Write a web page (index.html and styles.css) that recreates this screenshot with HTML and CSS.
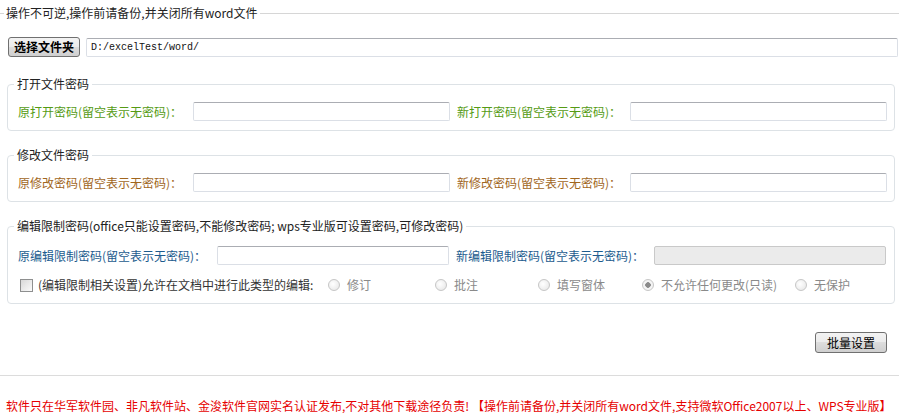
FILE: index.html
```html
<!DOCTYPE html>
<html lang="zh-CN">
<head>
<meta charset="UTF-8">
<title>批量设置Word密码</title>
<link rel="stylesheet" href="styles.css">
</head>
<body>

<fieldset class="notice">
    <legend>操作不可逆,操作前请备份,并关闭所有word文件</legend>
</fieldset>

<div class="path-row">
    <button type="button" class="btn btn-folder">选择文件夹</button>
    <input type="text" class="path-input" value="D:/excelTest/word/">
</div>

<!-- 打开密码 -->
<fieldset class="group">
    <legend>打开文件密码</legend>
    <div class="pwd-row">
        <label class="lbl green">原打开密码(留空表示无密码)：</label>
        <input type="text" class="txt">
        <label class="lbl green new">新打开密码(留空表示无密码)：</label>
        <input type="text" class="txt">
    </div>
</fieldset>

<!-- 修改密码 -->
<fieldset class="group">
    <legend>修改文件密码</legend>
    <div class="pwd-row">
        <label class="lbl brown">原修改密码(留空表示无密码)：</label>
        <input type="text" class="txt">
        <label class="lbl brown new">新修改密码(留空表示无密码)：</label>
        <input type="text" class="txt">
    </div>
</fieldset>

<!-- 编辑限制 -->
<fieldset class="group group-edit">
    <legend>编辑限制密码(office只能设置密码,不能修改密码; wps专业版可设置密码,可修改密码)</legend>
    <div class="pwd-row edit-row">
        <label class="lbl blue">原编辑限制密码(留空表示无密码)：</label>
        <input type="text" class="txt">
        <label class="lbl blue new">新编辑限制密码(留空表示无密码)：</label>
        <input type="text" class="txt" disabled>
    </div>
    <div class="opt-row">
        <input type="checkbox" class="chk">
        <span class="opt-desc">(编辑限制相关设置)允许在文档中进行此类型的编辑:</span>
        <div class="radios">
            <label class="radio"><input type="radio" name="prot" disabled>修订</label>
            <label class="radio"><input type="radio" name="prot" disabled>批注</label>
            <label class="radio"><input type="radio" name="prot" disabled>填写窗体</label>
            <label class="radio"><input type="radio" name="prot" checked disabled>不允许任何更改(只读)</label>
            <label class="radio"><input type="radio" name="prot" disabled>无保护</label>
        </div>
    </div>
</fieldset>

<div class="actions">
    <button type="button" class="btn btn-batch">批量设置</button>
</div>

<hr class="divider">

<p class="footer">软件只在华军软件园、非凡软件站、金浚软件官网实名认证发布,不对其他下载途径负责! 【操作前请备份,并关闭所有word文件,支持微软Office2007以上、WPS专业版】</p>

</body>
</html>
```

FILE: styles.css
```css
body {
    margin: 0;
    padding: 5px 0 0;
    font: 12px/16px "Noto Sans CJK SC", "SimSun", sans-serif;
    color: #222;
    background: #fff;
}
.notice {
    margin: 0;
    padding: 0 0 0 4px;
    border: 0;
    border-top: 1px solid #d6d6d6;
}
.notice legend {
    padding: 0 2px;
}
.path-row {
    display: flex;
    align-items: center;
    gap: 6px;
    margin: 16px 0 19px;
    padding: 0 1px 0 8px;
}
.btn {
    font: inherit;
    color: #000;
    height: 20px;
    padding: 0 4px;
    border: 1px solid #707070;
    border-radius: 3px;
    background: linear-gradient(#f3f3f3, #ebebeb 50%, #dddddd 50%, #cfcfcf);
}
.btn-folder {
    width: 72px;
    font-weight: bold;
}
.btn-batch {
    width: 72px;
    height: 21px;
}
.txt,
.path-input {
    box-sizing: border-box;
    height: 19px;
    border: 1px solid #dbdfe6;
    border-top-color: #abadb3;
    border-radius: 2px;
    background: #fff;
}
.path-input {
    flex: 1;
    padding: 0 4px;
    font-family: "Liberation Mono", monospace;
    font-size: 10px;
    color: #111;
}
.txt:disabled {
    background: #ebebeb;
    border-color: #c9c9c9;
}
.group {
    margin: 16px 4px 0 7px;
    padding: 10px 6px 9px 10px;
    border: 1px solid #dde2e6;
    border-radius: 4px;
}
.group legend {
    padding: 0 3px;
    margin-left: -4px;
}
.group-edit {
    padding-top: 12px;
    padding-bottom: 10px;
}
.pwd-row {
    display: grid;
    grid-template-columns: 175px 257px 180px 257px;
    align-items: center;
}
.edit-row {
    grid-template-columns: 199px 232px 205px 232px;
}
.lbl.new {
    padding-left: 7px;
}
.green { color: #559b14; }
.brown { color: #a1661d; }
.blue { color: #1c5b8e; }

.opt-row {
    display: flex;
    align-items: center;
    height: 16px;
    margin-top: 12px;
    padding-left: 2px;
}
.chk {
    appearance: none;
    width: 13px;
    height: 13px;
    margin: 0 5px 0 0;
    border: 1px solid #8e8f8f;
    background: linear-gradient(135deg, #d8d8d8, #fbfbfb);
}
.opt-desc {
    width: 289px;
    color: #333;
}
.radios {
    display: grid;
    grid-template-columns: 107px 103px 104px 153px auto;
    color: #8a8a8a;
}
.radio {
    display: flex;
    align-items: center;
    gap: 7px;
}
.radio input {
    appearance: none;
    width: 12px;
    height: 12px;
    margin: 0 0 0 1px;
    border: 1px solid #c6c6c6;
    border-radius: 50%;
    background: radial-gradient(circle at 40% 40%, #fff, #e4e4e4);
}
.radio input:checked {
    background: radial-gradient(circle, #8a8a8a 0 2.5px, #f4f4f4 3px);
}
.actions {
    display: flex;
    justify-content: flex-end;
    margin: 28px 12px 0 0;
}
.divider {
    margin: 22px 0 0;
    border: 0;
    border-top: 1px solid #dcdcdc;
}
.footer {
    margin: 22px 0 0;
    padding-left: 6px;
    color: #e60000;
    white-space: nowrap;
}
```
